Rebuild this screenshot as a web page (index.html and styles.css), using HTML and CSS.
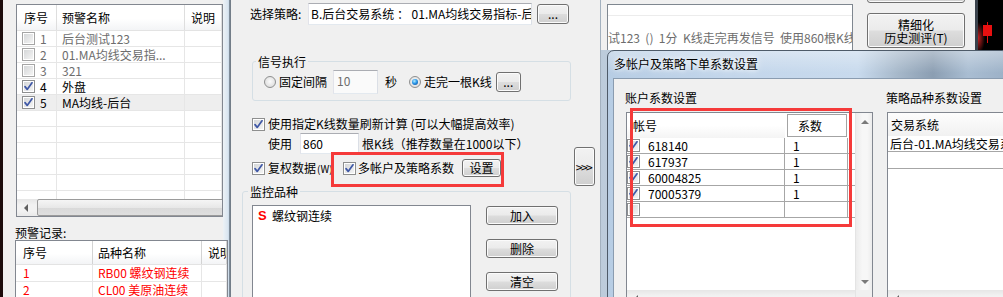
FILE: index.html
```html
<!DOCTYPE html>
<html lang="zh-CN">
<head>
<meta charset="utf-8">
<title>多帐户及策略下单系数设置</title>
<link rel="stylesheet" href="styles.css">
</head>
<body>

<section class="win win-left">
  <div class="lv lv1">
    <div class="lv-head">
      <div class="hc c1">序号</div>
      <div class="hc c2">预警名称</div>
      <div class="hc c3">说明</div>
    </div>
    <div class="lv-body">
      <div class="row dim"><div class="cell c1"><span class="cb"></span><span class="num">1</span></div><div class="cell c2">后台测试123</div><div class="cell c3"></div></div>
      <div class="row dim"><div class="cell c1"><span class="cb"></span><span class="num">2</span></div><div class="cell c2">01.MA均线交易指...</div><div class="cell c3"></div></div>
      <div class="row dim"><div class="cell c1"><span class="cb"></span><span class="num">3</span></div><div class="cell c2">321</div><div class="cell c3"></div></div>
      <div class="row"><div class="cell c1"><span class="cb on"><svg viewBox="0 0 11 11"><path d="M2 5.6 L4.2 8.4 L9 1.8"/></svg></span><span class="num">4</span></div><div class="cell c2">外盘</div><div class="cell c3"></div></div>
      <div class="row sel"><div class="cell c1"><span class="cb on"><svg viewBox="0 0 11 11"><path d="M2 5.6 L4.2 8.4 L9 1.8"/></svg></span><span class="num">5</span></div><div class="cell c2">MA均线-后台</div><div class="cell c3"></div></div>
      <div class="row"><div class="cell c1"></div><div class="cell c2"></div><div class="cell c3"></div></div>
      <div class="row"><div class="cell c1"></div><div class="cell c2"></div><div class="cell c3"></div></div>
      <div class="row"><div class="cell c1"></div><div class="cell c2"></div><div class="cell c3"></div></div>
      <div class="row"><div class="cell c1"></div><div class="cell c2"></div><div class="cell c3"></div></div>
      <div class="row"><div class="cell c1"></div><div class="cell c2"></div><div class="cell c3"></div></div>
      <div class="row"><div class="cell c1"></div><div class="cell c2"></div><div class="cell c3"></div></div>
    </div>
    <div class="hscroll"><span class="sb-btn"><i class="ar ar-l"></i></span><span class="sb-thumb"></span></div>
  </div>
  <div class="rec-label">预警记录:</div>
  <div class="lv lv2">
    <div class="lv-head">
      <div class="hc c1">序号</div>
      <div class="hc c2">品种名称</div>
      <div class="hc c3">说明</div>
    </div>
    <div class="lv-body">
      <div class="row red"><div class="cell c1">1</div><div class="cell c2">RB00 螺纹钢连续</div><div class="cell c3"></div></div>
      <div class="row red"><div class="cell c1">2</div><div class="cell c2">CL00 美原油连续</div><div class="cell c3"></div></div>
    </div>
  </div>
</section>

<section class="win win-mid">
  <div class="mid-main">
    <div class="strat">
      <span class="lbl">选择策略:</span>
      <span class="tb">B.后台交易系统 ： 01.MA均线交易指标-后台</span>
      <button class="btn">...</button>
    </div>

    <fieldset class="grp sig">
      <legend>信号执行</legend>
      <div class="sig-row">
        <span class="rd"></span><span class="ml3">固定间隔</span>
        <span class="tb tb-int">10</span>
        <span class="ml7">秒</span>
        <span class="rd on ml12"></span><span class="ml3">走完一根K线</span>
        <button class="btn btn-dots">...</button>
      </div>
    </fieldset>

    <div class="opt opt1"><span class="cb on"><svg viewBox="0 0 11 11"><path d="M2 5.6 L4.2 8.4 L9 1.8"/></svg></span><span class="ml3">使用指定K线数量刷新计算 (可以大幅提高效率)</span></div>
    <div class="opt opt2"><span>使用</span><span class="tb tb-bars">860</span><span class="ml3">根K线（推荐数量在1000以下）</span></div>
    <div class="opt opt3">
      <span class="cb on"><svg viewBox="0 0 11 11"><path d="M2 5.6 L4.2 8.4 L9 1.8"/></svg></span><span class="ml3 fq">复权数据<small>(W)</small></span>
      <span class="cb on"><svg viewBox="0 0 11 11"><path d="M2 5.6 L4.2 8.4 L9 1.8"/></svg></span><span class="ml2">多帐户及策略系数</span>
      <button class="btn btn-set">设置</button>
    </div>

    <fieldset class="grp mon">
      <legend>监控品种</legend>
      <div class="mon-body">
        <div class="listbox">
          <div class="lb-item"><span class="s-mark">S</span>螺纹钢连续</div>
        </div>
        <div class="mon-btns">
          <button class="btn">加入</button>
          <button class="btn">删除</button>
          <button class="btn">清空</button>
        </div>
      </div>
    </fieldset>
  </div>
  <div class="mid-side"><button class="btn btn-more">&gt;&gt;&gt;</button></div>
</section>

<section class="win win-back">
  <div class="back-box"><div class="back-line"></div><div class="back-text">试123  ()  1分  K线走完再发信号  使用860根K线</div></div>
  <div class="back-btns">
    <button class="btn btn-top"></button>
    <button class="btn btn-fine"><span class="fl">精细化</span><span class="fl">历史测评(T)</span></button>
  </div>
  <div class="chart">
    <svg viewBox="0 0 25 50" width="25" height="50">
      <line x1="9.5" y1="22" x2="9.5" y2="43" stroke="#e01010" stroke-width="1"/>
      <rect x="5" y="25" width="9" height="11" fill="#e81010"/>
    </svg>
  </div>
</section>

<section class="win dlg">
  <div class="dlg-title">多帐户及策略下单系数设置</div>
  <div class="dlg-client">
    <div class="col-a">
      <div class="sec-label">账户系数设置</div>
      <div class="lv lvA">
        <div class="lvA-main">
          <div class="lv-head">
            <div class="hc c1">帐号</div>
            <div class="hc c2">系数</div>
          </div>
          <div class="lv-body">
            <div class="row"><div class="cell c1"><span class="cb on"><svg viewBox="0 0 11 11"><path d="M2 5.6 L4.2 8.4 L9 1.8"/></svg></span><span class="acct">618140</span></div><div class="cell c2">1</div></div>
            <div class="row"><div class="cell c1"><span class="cb on"><svg viewBox="0 0 11 11"><path d="M2 5.6 L4.2 8.4 L9 1.8"/></svg></span><span class="acct">617937</span></div><div class="cell c2">1</div></div>
            <div class="row"><div class="cell c1"><span class="cb on"><svg viewBox="0 0 11 11"><path d="M2 5.6 L4.2 8.4 L9 1.8"/></svg></span><span class="acct">60004825</span></div><div class="cell c2">1</div></div>
            <div class="row"><div class="cell c1"><span class="cb on"><svg viewBox="0 0 11 11"><path d="M2 5.6 L4.2 8.4 L9 1.8"/></svg></span><span class="acct">70005379</span></div><div class="cell c2">1</div></div>
            <div class="row"><div class="cell c1"><span class="cb"></span></div><div class="cell c2"></div></div>
          </div>
          <div class="hscroll"><span class="sb-btn"><i class="ar ar-l"></i></span></div>
        </div>
        <div class="vscroll">
          <span class="sb-btn"><i class="ar ar-u"></i></span>
          <span class="sb-track"></span>
          <span class="sb-btn"><i class="ar ar-d"></i></span>
          <span class="sb-corner"></span>
        </div>
      </div>
    </div>
    <div class="col-b">
      <div class="sec-label">策略品种系数设置</div>
      <div class="lv lvB">
        <div class="lv-head"><div class="hc c1">交易系统</div></div>
        <div class="lv-body">
          <div class="row"><div class="cell c1">后台-01.MA均线交易系统</div></div>
          <div class="row row2"><div class="cell c1"></div></div>
        </div>
        <div class="hscroll"><span class="sb-btn"><i class="ar ar-l"></i></span></div>
      </div>
    </div>
  </div>
</section>

<div class="mark mark-a"></div>
<div class="mark mark-b"></div>

</body>
</html>
```

FILE: styles.css
```css
* { box-sizing: border-box; margin: 0; padding: 0; }
html, body { width: 1003px; height: 297px; overflow: hidden; }
body {
  position: relative;
  background: linear-gradient(90deg, #a9bccf, #c9d6e3);
  font: 12px/14px "Noto Sans CJK SC", "Noto Sans", sans-serif;
  color: #000;
}
button { font: inherit; color: inherit; }

.win { position: absolute; background: #f0f0f0; overflow: hidden; }

/* ---------- common controls ---------- */
.ml2 { margin-left: 2px; }
.ml3 { margin-left: 3px; }
.ml7 { margin-left: 7px; }
.ml12 { margin-left: 12px; }

.btn {
  display: flex; align-items: center; justify-content: center;
  border: 1px solid #707070; border-radius: 3px;
  background: linear-gradient(#f2f2f2 0%, #ebebeb 48%, #dddddd 52%, #cfcfcf 100%);
  box-shadow: inset 0 0 0 1px #fbfbfb;
  white-space: nowrap; flex: none; line-height: 14px;
}

.cb {
  width: 13px; height: 13px; flex: none;
  border: 1px solid #8e8f8f;
  background: linear-gradient(135deg, #d2d4d6, #f7f7f7);
  box-shadow: inset 0 0 0 1px #fff;
  display: inline-flex;
}
.cb svg { width: 11px; height: 11px; display: block; }
.cb path { fill: none; stroke: #3f58a6; stroke-width: 1.7; stroke-linecap: round; stroke-linejoin: round; }

.rd {
  width: 12px; height: 12px; flex: none; border-radius: 50%;
  border: 1px solid #8e8f8f;
  background: radial-gradient(circle at 50% 45%, #fbfbfb, #d6d6d6);
  display: inline-flex; align-items: center; justify-content: center;
}
.rd.on::after {
  content: ""; width: 6px; height: 6px; border-radius: 50%;
  background: radial-gradient(circle at 40% 35%, #b4ecff 0, #2a97e8 45%, #0b3d8a 100%);
}

.tb {
  display: flex; align-items: center; flex: none;
  background: #fff; white-space: nowrap; overflow: hidden;
  border: 1px solid; border-color: #abadb3 #dbdfe6 #e3e9ef #e2e3ea;
}

.lv {
  background: #fff; border: 1px solid #828790;
  display: flex; flex-direction: column; overflow: hidden; flex: none;
}
.lv-head {
  display: flex; flex: none;
  background: linear-gradient(#fff 0, #fff 55%, #f3f4f6 100%);
}
.hc { display: flex; align-items: center; white-space: nowrap; overflow: hidden; flex: none; border-right: 1px solid #dedede; }
.lv-body { flex: 1; overflow: hidden; }
.row { display: flex; height: 16px; border-bottom: 1px solid #e6e6e6; }
.cell { display: flex; align-items: center; white-space: nowrap; overflow: hidden; flex: none; border-right: 1px solid #e6e6e6; }

.hscroll {
  height: 17px; flex: none; display: flex; align-items: stretch;
  background: linear-gradient(#e6e6e6, #f2f2f2 35%, #f2f2f2 70%, #e9e9e9);
}
.sb-btn { width: 17px; height: 17px; flex: none; display: flex; align-items: center; justify-content: center; }
.ar { width: 0; height: 0; border: 4px solid transparent; display: block; }
.ar-l { border-left-width: 0; border-right: 4px solid #606060; }
.ar-u { border-top-width: 0; border-bottom: 4px solid #7a7a7a; }
.ar-d { border-bottom-width: 0; border-top: 4px solid #7a7a7a; }
.sb-thumb {
  flex: 1; margin: 0 -6px 0 3px;
  border: 1px solid #9b9b9b; border-radius: 2px;
  background: linear-gradient(#f5f5f5, #e8e8e8 50%, #d9d9d9 52%, #dfdfdf);
}

/* ---------- left window ---------- */
.win-left {
  left: 0; top: 0; width: 230px; height: 297px;
  border-left: 3px solid #1c0b0b;
  padding: 4px 0 0 13px;
  background: linear-gradient(90deg, #f0f0f0 0 220px, #edf2f6 220px, #d9e5f0 225px, #c6d6e6 226px, #7f8c99 226px);
}
.lv1 { width: 207px; height: 213px; }
.lv1 .lv-head { height: 26px; border-bottom: 1px solid #e3e3e3; }
.lv1 .c1 { width: 40px; padding-left: 5px; }
.lv1 .c2 { width: 128px; padding-left: 5px; }
.lv1 .c3 { flex: 1; padding-left: 6px; }
.lv1 .hc.c1 { padding-left: 7px; }
.num { margin-left: 5px; }
.row.dim { color: #6d6d6d; }
.row.dim .cb { border-color: #a5a5a5; }
.row.sel { background: #eeeeee; }

.rec-label { margin: 9px 0 0 -1px; height: 14px; }
.lv2 { width: 213px; height: 80px; margin-left: -1px; }
.lv2 .lv-head { height: 24px; border-bottom: 1px solid #e3e3e3; }
.lv2 .hc { border-right-color: #d3d3d3; }
.lv2 .c1 { width: 77px; padding-left: 7px; }
.lv2 .c2 { width: 109px; padding-left: 5px; }
.lv2 .c3 { flex: 1; padding-left: 6px; }
.lv2 .row { height: 17px; }
.row.red { color: #f00; }

/* ---------- middle window ---------- */
.win-mid {
  left: 230px; top: 0; width: 371px; height: 297px;
  border-left: 1px solid #737d88; border-right: 1px solid #a3b1bf;
  padding: 3px 0 0 11px; display: flex;
}
.mid-main { width: 330px; flex: none; display: flex; flex-direction: column; }
.mid-side { padding: 144px 0 0 2px; }
.btn-more { width: 21px; height: 39px; letter-spacing: -1.5px; padding-right: 2px; }

.strat { display: flex; align-items: center; height: 22px; padding-left: 8px; }
.strat .lbl { width: 58px; flex: none; }
.strat .tb { width: 224px; height: 22px; padding-left: 2px; }
.strat .btn { margin-left: 5px; width: 32px; height: 20px; }

fieldset.grp { border: 1px solid #d5dfe5; border-radius: 3px; min-width: 0; flex: none; }
.grp legend { padding: 0 2px; line-height: 13px; }
.sig { margin: 30px 0 0 10px; width: 319px; padding: 2px 0 6px 11px; }
.sig legend { margin-left: -8px; }
.sig-row { display: flex; align-items: center; height: 24px; }
.tb-int { margin-left: 6px; width: 45px; height: 24px; padding: 0 0 3px 3px; color: #6d6d6d; background: #fafafa; }
.btn-dots { margin-left: 4px; width: 25px; height: 20px; }

.opt { display: flex; align-items: center; flex: none; white-space: nowrap; }
.opt1 { margin-top: 15px; height: 16px; padding-left: 10px; }
.opt2 { margin-top: 1px; height: 21px; padding-left: 26px; }
.tb-bars { margin-left: 8px; width: 59px; height: 21px; padding-left: 2px; }
.opt3 { margin-top: 5px; height: 18px; padding-left: 10px; }
.fq { width: 75px; flex: none; }
.fq small { font-size: 10px; margin-left: 1px; }
.btn-set { margin-left: 8px; width: 39px; height: 18px; }

.mon { margin-top: 8px; width: 329px; padding: 7px 0 0 9px; }
.mon legend { margin-left: -4px; }
.mon-body { display: flex; }
.listbox { width: 219px; height: 110px; background: #fff; border: 1px solid #828790; flex: none; }
.lb-item { display: flex; align-items: center; height: 14px; margin-top: 3px; padding-left: 5px; }
.s-mark { width: 14px; color: #f00; font: bold 13px/14px "Liberation Sans", sans-serif; }
.mon-btns { margin-left: 15px; padding-top: 1px; display: flex; flex-direction: column; gap: 14px; }
.mon-btns .btn { width: 72px; height: 19px; }

/* ---------- background window (top right) ---------- */
.win-back { left: 601px; top: 0; width: 402px; height: 50px; display: flex; }
.back-box {
  margin: 4px 0 0 6px; width: 246px; height: 60px; flex: none;
  background: #fff; border: 1px solid #7f8790; overflow: hidden;
}
.back-line { height: 11px; border-bottom: 1px solid #ececec; }
.back-text { margin-top: 15px; white-space: pre; color: #6d6d6d; }
.back-btns { margin-left: 14px; width: 98px; flex: none; display: flex; flex-direction: column; }
.btn-top { margin-top: -10px; height: 13px; }
.btn-fine { margin-top: 10px; height: 35px; flex-direction: column; padding-top: 1px; }
.btn-fine .fl { display: block; height: 13px; line-height: 13px; font-size: 12px; }
.chart {
  margin-left: 10px; width: 28px; height: 50px; flex: none;
  border-left: 3px solid #3a424c;
  background: radial-gradient(ellipse 7px 16px at 0 38px, rgba(235, 40, 40, .85), rgba(235, 40, 40, 0)), #000;
}
.chart svg { display: block; }

/* ---------- dialog ---------- */
.dlg {
  left: 607px; top: 50px; width: 402px; height: 252px;
  border: 1px solid #4e5b69; border-radius: 7px 7px 0 0;
  background:
    linear-gradient(180deg, rgba(255,255,255,.35), rgba(255,255,255,0) 22px),
    linear-gradient(90deg, #b7cde4 0, #c3d6eb 120px, #c8daed 250px, #a6b8ca 290px, #8b9eb2 325px, #a9bdd2 360px, #9bb0c6 400px);
}
.dlg-title {
  height: 27px; line-height: 25px; padding-left: 6px; white-space: nowrap;
  text-shadow: 0 0 4px #fff, 0 0 8px #fff;
}
.dlg-client {
  margin-left: 5px; height: 230px;
  border: 1px solid #8a9cb0; background: #f0f0f0;
  padding: 12px 0 0 12px; display: flex; gap: 14px;
}
.sec-label { margin: 0 0 7px -1px; height: 14px; white-space: nowrap; }

.lvA { width: 247px; height: 196px; flex-direction: row; }
.lvA-main { flex: 1; min-width: 0; display: flex; flex-direction: column; }
.lvA .lv-head { height: 25px; background: #fff; }
.lvA .hc.c1 { width: 158px; padding-left: 6px; border-right: none; background: linear-gradient(#fff, #fff 50%, #f4f4f4); }
.lvA .hc.c2 { width: 60px; height: 23px; margin: 1px 0 0 2px; padding-left: 10px; border: 1px solid #a3a3a3; background: #fff; }
.lvA .row { border-bottom-color: #a6a6a6; }
.lvA .cell { border-right-color: #a6a6a6; }
.lvA .cell.c1 { width: 158px; }
.lvA .cell.c2 { width: 63px; padding-left: 8px; }
.acct { margin-left: 8px; }
.vscroll {
  width: 17px; flex: none; display: flex; flex-direction: column;
  border-left: 1px solid #e4e4e4;
  background: linear-gradient(90deg, #ececec, #f7f7f7 40%, #f7f7f7 70%, #ececec);
}
.sb-track { flex: 1; }
.sb-corner { height: 17px; flex: none; background: #f0f0f0; }

.lvB { width: 140px; height: 196px; }
.lvB .lv-head { height: 23px; background: linear-gradient(#fdfdfd, #f1f1f1); }
.lvB .hc.c1 { width: 200px; padding-left: 3px; border: none; }
.lvB .row { border-bottom-color: #a6a6a6; }
.lvB .row2 { height: 17px; }
.lvB .cell.c1 { width: 200px; padding-left: 2px; border: none; }

/* ---------- red annotation frames ---------- */
.mark { position: absolute; border: 3px solid #f53a3a; pointer-events: none; }
.mark-a { left: 331px; top: 152px; width: 173px; height: 35px; }
.mark-b { left: 630px; top: 108px; width: 222px; height: 119px; }
```
